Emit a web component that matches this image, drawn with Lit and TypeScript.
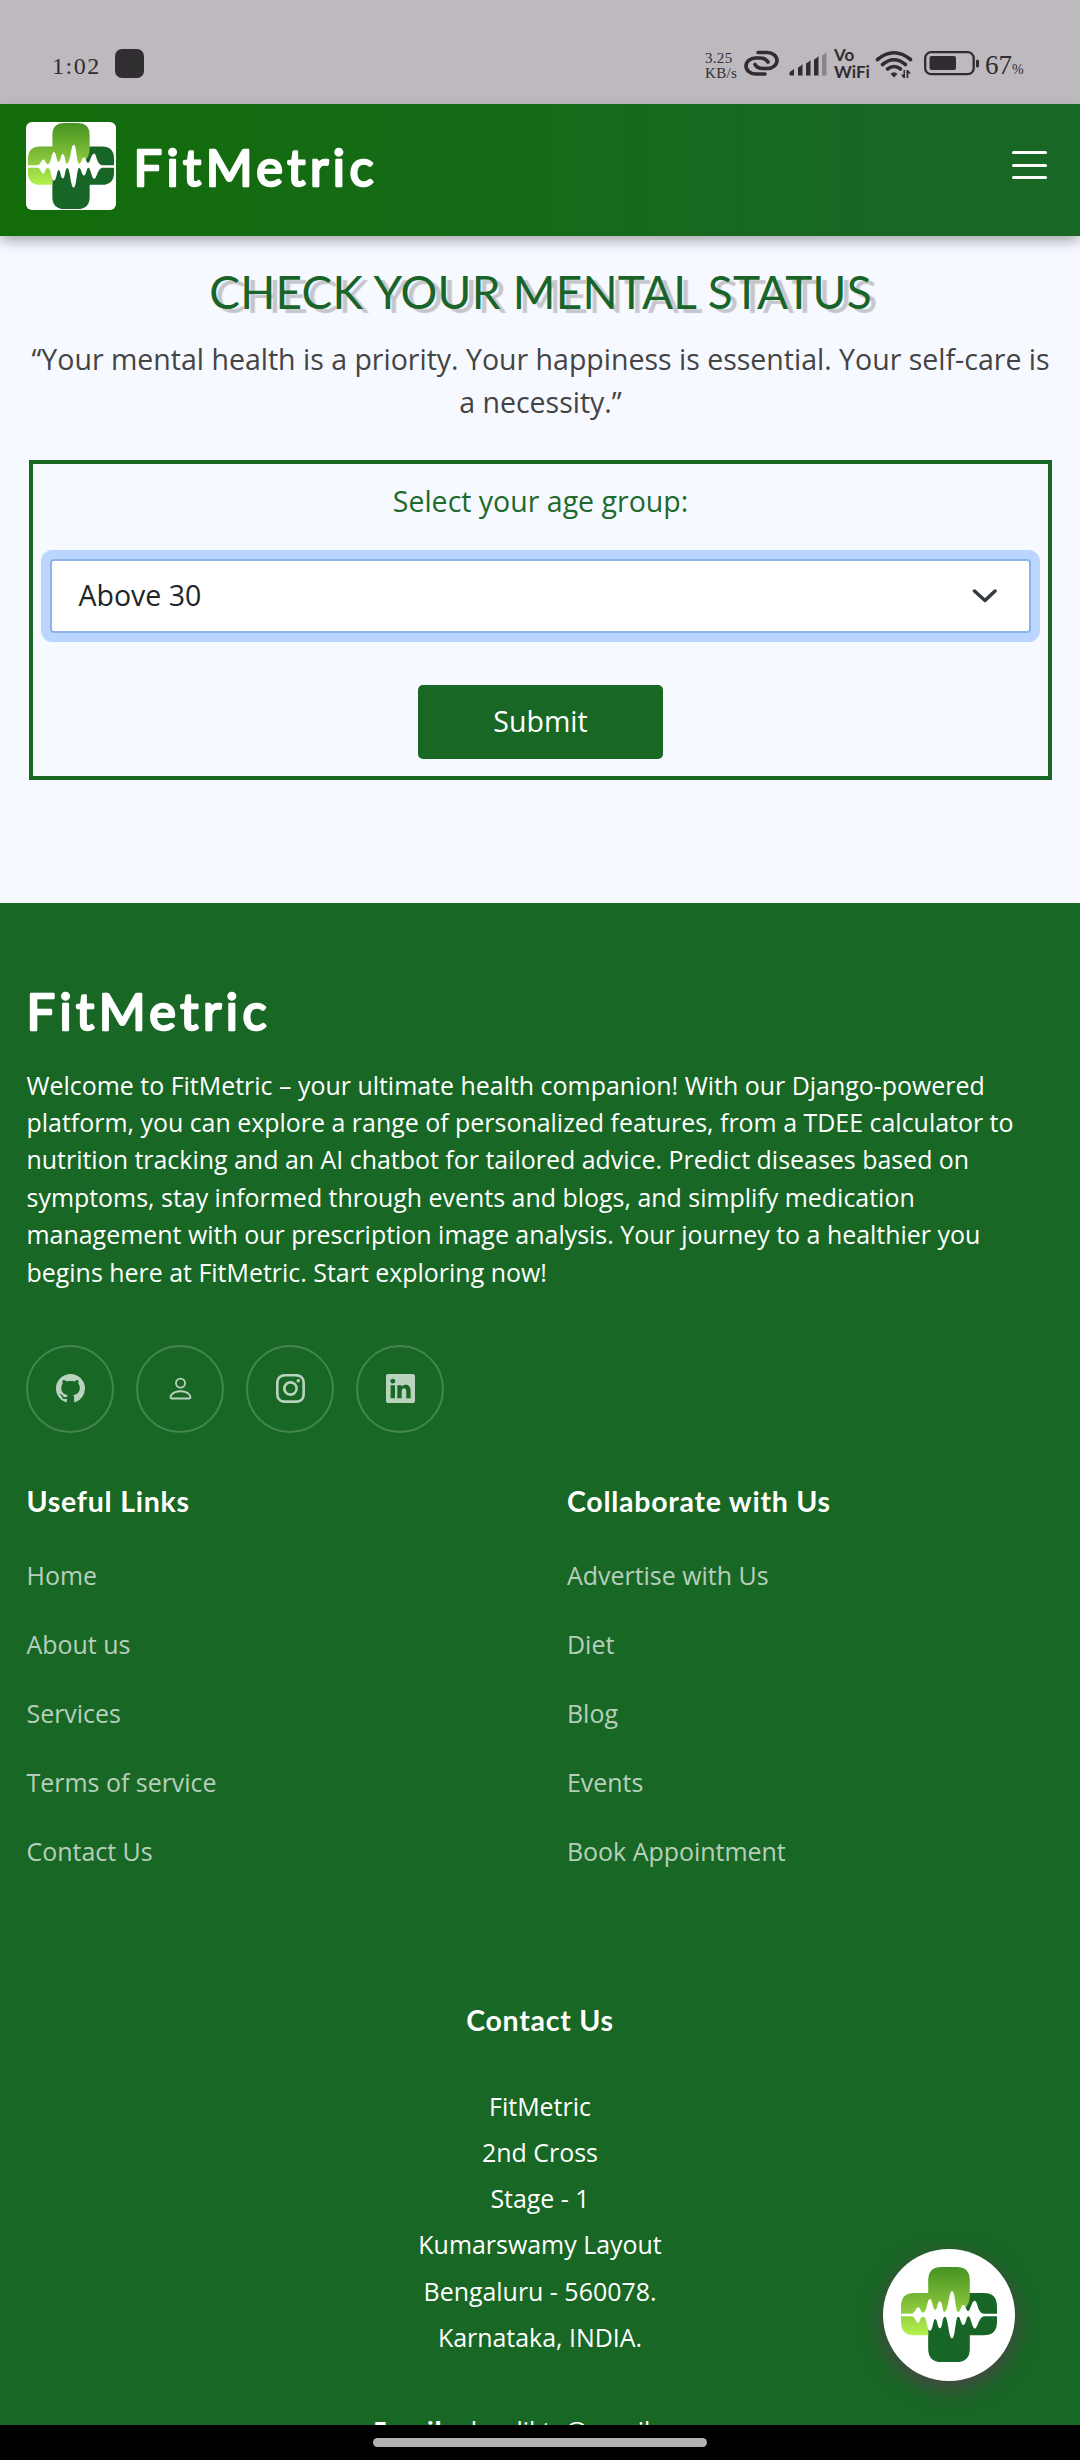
import { LitElement, html, css, svg } from "lit";
import { customElement } from "lit/decorators.js";

const logoMark = (id: string) => html`
  <svg class="mark" viewBox="124 141 286 285" preserveAspectRatio="none">
    <defs>
      <linearGradient id="${id}" gradientUnits="userSpaceOnUse" x1="0" y1="141" x2="0" y2="346">
        <stop offset="0" stop-color="#469321" />
        <stop offset="0.5" stop-color="#7fbd38" />
        <stop offset="1" stop-color="#b4f04f" />
      </linearGradient>
    </defs>
    <path fill="#186528" d="M300 219H370Q410 219 410 259V306Q410 346 370 346H329V386Q329 426 289 426H245Q205 426 205 386V285H300Z" />
    <path fill="url(#${id})" d="M245 141H289Q329 141 329 181V225Q329 258 309 268L290 285H222Q205 300 205 320V346H164Q124 346 124 306V259Q124 219 164 219H205V181Q205 141 245 141Z" />
    <path
      fill="#fff"
      d="M122 281H155C167 280 168 262 175 262S183 279 190 278C201 277 202 237 210 237S219 270 226 270S232 244 240 244S247 276 253 276C266 276 266 213 276 213S286 276 294 276S302 255 310 255S317 273 324 273S334 242 344 242C352 242 352 281 372 281H412V289H372C356 289 352 326 344 326S332 289 325 289S318 315 310 315S302 290 294 290C286 290 286 355 276 355S264 290 255 290S248 325 240 325S233 297 226 297S220 332 210 332C201 332 202 290 190 290S183 308 175 308S167 290 155 289H122Z"
    />
  </svg>
`;

const icons = {
  github: svg`<path d="M8 0C3.58 0 0 3.58 0 8c0 3.54 2.29 6.53 5.47 7.59.4.07.55-.17.55-.38 0-.19-.01-.82-.01-1.49-2.01.37-2.53-.49-2.69-.94-.09-.23-.48-.94-.82-1.13-.28-.15-.68-.52-.01-.53.63-.01 1.08.58 1.23.82.72 1.21 1.87.87 2.33.66.07-.52.28-.87.51-1.07-1.78-.2-3.64-.89-3.64-3.95 0-.87.31-1.59.82-2.15-.08-.2-.36-1.02.08-2.12 0 0 .67-.21 2.2.82.64-.18 1.32-.27 2-.27s1.36.09 2 .27c1.53-1.04 2.2-.82 2.2-.82.44 1.1.16 1.92.08 2.12.51.56.82 1.27.82 2.15 0 3.07-1.87 3.75-3.65 3.95.29.25.54.73.54 1.48 0 1.07-.01 1.93-.01 2.2 0 .21.15.46.55.38A8.01 8.01 0 0 0 16 8c0-4.42-3.58-8-8-8"/>`,
  person: svg`<path d="M8 8a3 3 0 1 0 0-6 3 3 0 0 0 0 6m2-3a2 2 0 1 1-4 0 2 2 0 0 1 4 0m4 8c0 1-1 1-1 1H3s-1 0-1-1 1-4 6-4 6 3 6 4m-1-.004c-.001-.246-.154-.986-.832-1.664C11.516 10.68 10.289 10 8 10s-3.516.68-4.168 1.332c-.678.678-.83 1.418-.832 1.664z"/>`,
  instagram: svg`<path d="M8 0C5.829 0 5.556.01 4.703.048 3.85.088 3.269.222 2.76.42a3.9 3.9 0 0 0-1.417.923A3.9 3.9 0 0 0 .42 2.76C.222 3.268.087 3.85.048 4.7.01 5.555 0 5.827 0 8.001c0 2.172.01 2.444.048 3.297.04.852.174 1.433.372 1.942.205.526.478.972.923 1.417.444.445.89.719 1.416.923.51.198 1.09.333 1.942.372C5.555 15.99 5.827 16 8 16s2.444-.01 3.298-.048c.851-.04 1.434-.174 1.943-.372a3.9 3.9 0 0 0 1.416-.923c.445-.445.718-.891.923-1.417.197-.509.332-1.09.372-1.942C15.99 10.445 16 10.173 16 8s-.01-2.445-.048-3.299c-.04-.851-.175-1.433-.372-1.941a3.9 3.9 0 0 0-.923-1.417A3.9 3.9 0 0 0 13.24.42c-.51-.198-1.092-.333-1.943-.372C10.443.01 10.172 0 7.998 0zm-.717 1.442h.718c2.136 0 2.389.007 3.232.046.78.035 1.204.166 1.486.275.373.145.64.319.92.599s.453.546.598.92c.11.281.24.705.275 1.485.039.843.047 1.096.047 3.231s-.008 2.389-.047 3.232c-.035.78-.166 1.203-.275 1.485a2.5 2.5 0 0 1-.599.919c-.28.28-.546.453-.92.598-.28.11-.704.24-1.485.276-.843.038-1.096.047-3.232.047s-2.39-.009-3.233-.047c-.78-.036-1.203-.166-1.485-.276a2.5 2.5 0 0 1-.92-.598 2.5 2.5 0 0 1-.6-.92c-.109-.281-.24-.705-.275-1.485-.038-.843-.046-1.096-.046-3.233s.008-2.388.046-3.231c.036-.78.166-1.204.276-1.486.145-.373.319-.64.599-.92s.546-.453.92-.598c.282-.11.705-.24 1.485-.276.738-.034 1.024-.044 2.515-.045zm4.988 1.328a.96.96 0 1 0 0 1.92.96.96 0 0 0 0-1.92m-4.27 1.122a4.109 4.109 0 1 0 0 8.217 4.109 4.109 0 0 0 0-8.217m0 1.441a2.667 2.667 0 1 1 0 5.334 2.667 2.667 0 0 1 0-5.334"/>`,
  linkedin: svg`<path d="M0 1.146C0 .513.526 0 1.175 0h13.65C15.474 0 16 .513 16 1.146v13.708c0 .633-.526 1.146-1.175 1.146H1.175C.526 16 0 15.487 0 14.854zm4.943 12.248V6.169H2.542v7.225zm-1.2-8.212c.837 0 1.358-.554 1.358-1.248-.015-.709-.52-1.248-1.342-1.248S2.4 3.226 2.4 3.934c0 .694.521 1.248 1.327 1.248zm4.908 8.212V9.359c0-.216.016-.432.08-.586.173-.431.568-.878 1.232-.878.869 0 1.216.662 1.216 1.634v3.865h2.401V9.25c0-2.22-1.184-3.252-2.764-3.252-1.274 0-1.845.7-2.165 1.193v.025h-.016l.016-.025V6.169h-2.4c.03.678 0 7.225 0 7.225z"/>`,
};

@customElement("fm-wordmark")
class Wordmark extends LitElement {
  static styles = css`
    :host { display: block; width: 250px; height: 50px; }
    .word { display: block; overflow: visible; fill: #fff; stroke: #fff; stroke-width: 2.5px; stroke-linejoin: round; font: 400 50.5px Lato, sans-serif; }
  `;
  render() {
    return html`<svg class="word" width="250" height="50" viewBox="0 0 250 50">
      <text x="-0.5" y="43" textLength="240" lengthAdjust="spacing">FitMetric</text>
    </svg>`;
  }
}

@customElement("fm-status-bar")
class StatusBar extends LitElement {
  static styles = css`
    :host { display: flex; height: 104px; box-sizing: border-box; padding: 46px 57px 0 52px; align-items: flex-start; background: #beb9bf; color: #2f2d30; font-family: "Liberation Serif", serif; }
    .time { font-size: 24px; line-height: 24px; letter-spacing: 1.5px; padding-top: 8px; width: 63px; }
    .app { width: 29px; height: 29px; border-radius: 7px; background: #302e31; margin-top: 3px; }
    .grow { flex: 1; }
    .rate { font-size: 15px; line-height: 15px; letter-spacing: 0.3px; padding-top: 5px; width: 39px; white-space: nowrap; }
    .chain, .signal, .wifi, .battery { display: block; flex: none; }
    .chain { margin: 3px 0 0; }
    .signal { margin: 5px 0 0 10px; }
    .vo { font: 700 17px/16.5px Lato, sans-serif; width: 38px; margin: 1px 0 0 7px; white-space: nowrap; }
    .wifi { margin: 3px 0 0 3px; }
    .battery { margin: 4px 0 0 11px; }
    .pct { font-size: 27px; line-height: 30px; margin: 4px 0 0 6px; white-space: nowrap; width: 38px; }
    .sign { font-size: 14px; }
  `;
  render() {
    return html`
      <div class="time">1:02</div>
      <div class="app"></div>
      <div class="grow"></div>
      <div class="rate">3.25<br />KB/s</div>
      <svg class="chain" width="35" height="28" viewBox="0 0 35 28" fill="none" stroke="#2f2d30" stroke-width="3.6" stroke-linecap="round">
        <path d="M14 3.500H23.500A9.500 8 0 0 1 23.500 19.500H18.500Q13.500 19.500 11 15.500" />
        <path d="M21 25H11.500A9.500 8 0 0 1 11.500 9H16.500Q21.500 9 24 13" />
      </svg>
      <svg class="signal" width="38" height="26" viewBox="0 0 38 26" fill="#2f2d30">
        <path d="M5 18V24.500H1Q-.5 22 1.500 20.500Z" />
        <path d="M13.500 13V24.500H9V16.500Q11 16 13.500 13Z" />
        <path d="M21.500 9V24.500H17V12.500Q19 12 21.500 9Z" />
        <path d="M29.500 5V24.500H25V8.500Q27 8 29.500 5Z" />
        <path fill="#88848a" d="M37.500 1V24.500H33V4.500Q35 4 37.500 1Z" />
      </svg>
      <div class="vo">Vo<br />WiFi</div>
      <svg class="wifi" width="38" height="30" viewBox="0 0 38 30" fill="none" stroke="#2f2d30" stroke-width="3.600" stroke-linecap="round">
        <path d="M2.500 10.500Q19-3 35.500 10.500" />
        <path d="M7.500 15.500Q19 6 30.500 15.500" />
        <path d="M12.500 20Q19 15 25.500 20" />
        <path fill="#2f2d30" stroke="none" d="M15.500 25Q19 21.500 22.500 25L19 28.500Z" />
        <path fill="#2f2d30" stroke="none" d="M30 21V29H28.300L26 25.500H28.500V21ZM31.500 29V21H33L36 24.500H33.300V29Z" />
      </svg>
      <svg class="battery" width="55" height="26" viewBox="0 0 55 26">
        <rect x="1.200" y="2.200" width="48.500" height="22" rx="6" fill="none" stroke="#2f2d30" stroke-width="2.300" />
        <rect x="5.500" y="6" width="26.500" height="14" rx="2" fill="#2f2d30" />
        <rect x="52" y="9.500" width="3" height="8" rx="1.500" fill="#2f2d30" />
      </svg>
      <div class="pct">67<span class="sign">%</span></div>
    `;
  }
}

@customElement("app-root")
class AppRoot extends LitElement {
  static styles = css`
    :host { display: block; font-family: "Open Sans", sans-serif; }
    .screen { position: relative; display: flex; flex-direction: column; width: 1080px; height: 2460px; overflow: hidden; background: #f6f9ff; }
    .screen > * { flex: none; }
    .bar { position: relative; height: 132px; box-sizing: border-box; padding: 18px 33px 0 26px; display: flex; align-items: flex-start; background: linear-gradient(90deg, #126c09, #166a1b 55%, #186725 85%); box-shadow: 0 6px 12px -1px rgba(40, 40, 40, 0.38); }
    .logo { width: 90px; height: 88px; border-radius: 6px; background: #fff; box-sizing: border-box; padding: 1px 2px; }
    .mark { display: block; width: 100%; height: 100%; }
    .name { margin: 21px 0 0 18px; }
    .menu { margin: 29px 0 0 auto; display: flex; flex-direction: column; gap: 9.500px; width: 35px; }
    .menu span { height: 3px; border-radius: 2px; background: #fff; }
    .main { height: 667px; box-sizing: border-box; padding: 27.500px 28px 0 29px; text-align: center; font-size: 28.500px; line-height: 43px; }
    .title { margin: 0; height: 56px; white-space: nowrap; font: 400 46px/56px Lato, sans-serif; letter-spacing: 0.22px; color: #196428; text-shadow: 6px 4px 1px #c5c6cb; }
    .quote { margin: 18.500px 0 0; color: #444; height: 86px; }
    .form { margin-top: 36px; height: 320px; box-sizing: border-box; border: 4px solid #186725; padding: 16px 17px 0; display: flex; flex-direction: column; align-items: center; }
    .label { color: #1d6a2d; }
    .select { margin-top: 36px; width: 981px; height: 74px; box-sizing: border-box; border: 2px solid #8db4ea; border-radius: 4px; background: #fff; box-shadow: 0 0 0 9px #bad6ff; display: flex; align-items: center; justify-content: space-between; padding: 0 32px 0 26.500px; color: #212529; }
    .value { padding-bottom: 2px; }
    .chev { display: block; }
    .submit { margin-top: 52px; width: 245px; height: 74px; border: 0; border-radius: 5px; padding: 0 0 2px; background: #186725; color: #fff; font: 400 28.500px "Open Sans", sans-serif; }
    .footer { height: 1522px; box-sizing: border-box; overflow: hidden; background: #186725; color: #fff; padding: 84px 26.500px 0; font-size: 24.950px; }
    .about { margin: 29.500px 0 0; line-height: 37.400px; height: 225px; }
    .social { margin: 53.500px 0 0 -0.500px; display: flex; gap: 22px; }
    .circle { width: 88px; height: 88px; box-sizing: border-box; border: 2px solid #458650; border-radius: 50%; display: flex; align-items: center; justify-content: center; padding-bottom: 1px; }
    .icon { display: block; fill: #bad3be; }
    .columns { display: flex; margin-top: 50px; height: 490px; }
    .col { flex: none; width: 540.500px; }
    .head { margin: 0; font: 700 28.500px/36px Lato, sans-serif; letter-spacing: 0.75px; }
    .links { list-style: none; margin: 21.500px 0 0; padding: 0; }
    .links li { line-height: 69.100px; height: 69.100px; color: rgba(255, 255, 255, 0.7); }
    .contact { text-align: center; margin-top: 28.500px; line-height: 46.300px; }
    .address { margin: 45px 0 0; }
    .nav { height: 35px; background: #000; display: flex; justify-content: center; align-items: center; }
    .pill { width: 334px; height: 9px; border-radius: 5px; background: #b3b1b3; }
    .fab { position: absolute; left: 883px; top: 2249px; width: 132px; height: 132px; box-sizing: border-box; border-radius: 50%; background: #fff; box-shadow: 0 7px 22px rgba(100, 50, 85, 0.7); padding: 18px 18px 19px; }
  `;

  useful = ["Home", "About us", "Services", "Terms of service", "Contact Us"];
  collaborate = ["Advertise with Us", "Diet", "Blog", "Events", "Book Appointment"];
  address = ["FitMetric", "2nd Cross", "Stage - 1", "Kumarswamy Layout", "Bengaluru - 560078.", "Karnataka, INDIA."];

  column(title: string, links: string[]) {
    return html`<div class="col">
      <h4 class="head">${title}</h4>
      <ul class="links">${links.map((l) => html`<li>${l}</li>`)}</ul>
    </div>`;
  }

  render() {
    return html`
      <div class="screen">
        <fm-status-bar></fm-status-bar>
        <header class="bar">
          <div class="logo">${logoMark("logo-a")}</div>
          <fm-wordmark class="name"></fm-wordmark>
          <div class="menu"><span></span><span></span><span></span></div>
        </header>
        <main class="main">
          <h2 class="title">CHECK YOUR MENTAL STATUS</h2>
          <p class="quote">“Your mental health is a priority. Your happiness is essential. Your self-care is a necessity.”</p>
          <div class="form">
            <div class="label">Select your age group:</div>
            <div class="select">
              <span class="value">Above 30</span>
              <svg class="chev" width="26" height="16" viewBox="0 0 26 16" fill="none" stroke="#343a40" stroke-width="3.500" stroke-linecap="round" stroke-linejoin="round"><path d="M3.500 3L14 12.500L24 3" /></svg>
            </div>
            <button class="submit">Submit</button>
          </div>
        </main>
        <footer class="footer">
          <fm-wordmark></fm-wordmark>
          <p class="about">Welcome to FitMetric – your ultimate health companion! With our Django-powered platform, you can explore a range of personalized features, from a TDEE calculator to nutrition tracking and an AI chatbot for tailored advice. Predict diseases based on symptoms, stay informed through events and blogs, and simplify medication management with our prescription image analysis. Your journey to a healthier you begins here at FitMetric. Start exploring now!</p>
          <div class="social">
            ${[icons.github, icons.person, icons.instagram, icons.linkedin].map(
              (i) => html`<div class="circle"><svg class="icon" width="29" height="29" viewBox="0 0 16 16">${i}</svg></div>`
            )}
          </div>
          <div class="columns">
            ${this.column("Useful Links", this.useful)} ${this.column("Collaborate with Us", this.collaborate)}
          </div>
          <div class="contact">
            <h4 class="head">Contact Us</h4>
            <p class="address">
              ${this.address.map((a) => html`${a}<br />`)}<br />
              <strong>Email:</strong> nhunlikta@gmail.com
            </p>
          </div>
        </footer>
        <div class="nav"><div class="pill"></div></div>
        <div class="fab">${logoMark("logo-b")}</div>
      </div>
    `;
  }
}
